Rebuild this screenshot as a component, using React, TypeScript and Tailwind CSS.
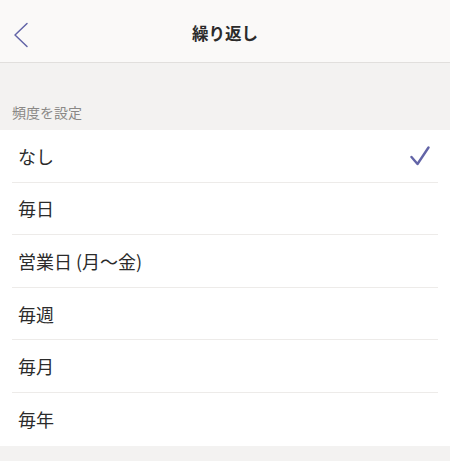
import React from "react";

const items = ["なし", "毎日", "営業日 (月〜金)", "毎週", "毎月", "毎年"];

export default function App() {
  return (
    <div
      className="w-[450px] h-[461px] bg-[#f3f2f1] overflow-hidden"
      style={{ fontFamily: '"Noto Sans CJK JP", "Noto Sans", sans-serif' }}
    >
      <div className="h-[63px] bg-[#faf9f8] border-b border-[#e1dfdd] flex items-center relative pt-[5px]">
        <svg
          className="absolute left-[13px] top-[22px]"
          width="16"
          height="26"
          viewBox="0 0 16 26"
          fill="none"
        >
          <path d="M14 1.5 L2 13 L14 24.5" stroke="#6264a7" strokeWidth="1.5" strokeLinecap="round" strokeLinejoin="round" />
        </svg>
        <div className="flex-1 text-center text-[16.5px] font-bold text-[#2b2b2b] leading-none">
          繰り返し
        </div>
      </div>
      <div className="h-[67px] flex items-end pb-[11px] pl-[12px] text-[14px] text-[#8a8886] leading-none">
        頻度を設定
      </div>
      <div className="bg-white">
        {items.map((t, i) => (
          <div key={t} className="px-[12px]">
            <div
              className={`h-[52.6px] flex items-center justify-between pl-[6px] pr-[8px] ${
                i < items.length - 1 ? "border-b border-[#edebe9]" : ""
              }`}
            >
              <span className="text-[18px] text-[#2b2b2b] leading-none">{t}</span>
              {i === 0 && (
                <svg width="20" height="20" viewBox="0 0 20 20" fill="none">
                  <path d="M1.5 11 L7.5 18 L18.5 1.5" stroke="#6264a7" strokeWidth="2.4" strokeLinecap="round" strokeLinejoin="round" />
                </svg>
              )}
            </div>
          </div>
        ))}
      </div>
    </div>
  );
}
